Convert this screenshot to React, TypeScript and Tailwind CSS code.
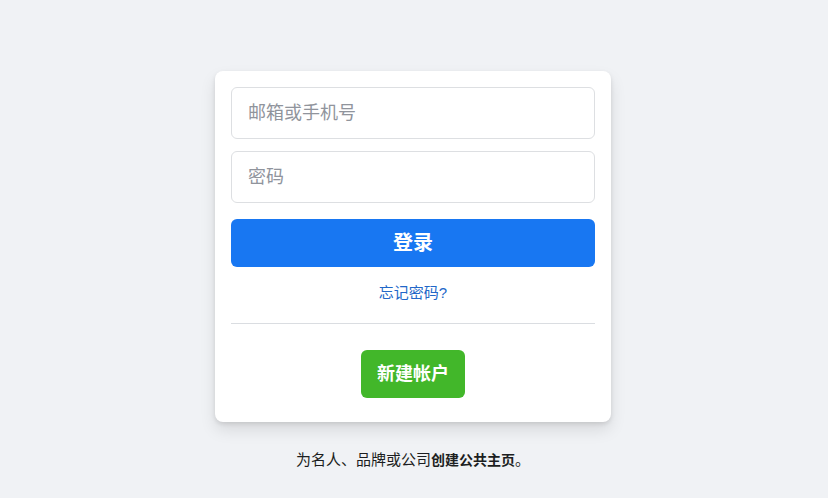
import type { FC } from 'react';

const font = "font-['Liberation_Sans','Noto_Sans_CJK_SC',sans-serif]";

const App: FC = () => {
  return (
    <div className={`min-h-screen bg-[#f0f2f5] pt-[71px] pr-[2px] ${font}`}>
      <div className="mx-auto flex w-[396px] flex-col items-center">
        <div className="w-full rounded-lg bg-white px-4 pt-4 pb-6 shadow-[0_2px_4px_rgba(0,0,0,0.1),0_8px_16px_rgba(0,0,0,0.1)]">
          <input
            className="h-[52px] w-full rounded-md border border-[#dddfe2] px-4 text-[18px] text-[#1c1e21] outline-none placeholder:text-[#90949c]"
            placeholder="邮箱或手机号"
          />
          <input
            type="password"
            className="mt-3 h-[52px] w-full rounded-md border border-[#dddfe2] px-4 text-[18px] text-[#1c1e21] outline-none placeholder:text-[#90949c]"
            placeholder="密码"
          />
          <button className="mt-4 h-12 w-full rounded-md bg-[#1877f2] text-[20px] font-bold text-white">
            登录
          </button>
          <div className="mt-[14px] text-center">
            <a className="text-[15px] leading-5 text-[#2267c8]" href="#">
              忘记密码?
            </a>
          </div>
          <div className="mt-[18px] border-t border-[#dadde1]" />
          <div className="mt-[26px] flex justify-center">
            <button className="h-12 rounded-md bg-[#42b72a] px-4 text-[18px] font-bold text-white">
              新建帐户
            </button>
          </div>
        </div>
        <p className="mt-7 text-[15px] leading-5 text-[#1c1e21]">
          为名人、品牌或公司<span className="text-[14px] font-bold">创建公共主页</span>。
        </p>
      </div>
    </div>
  );
};

export default App;
